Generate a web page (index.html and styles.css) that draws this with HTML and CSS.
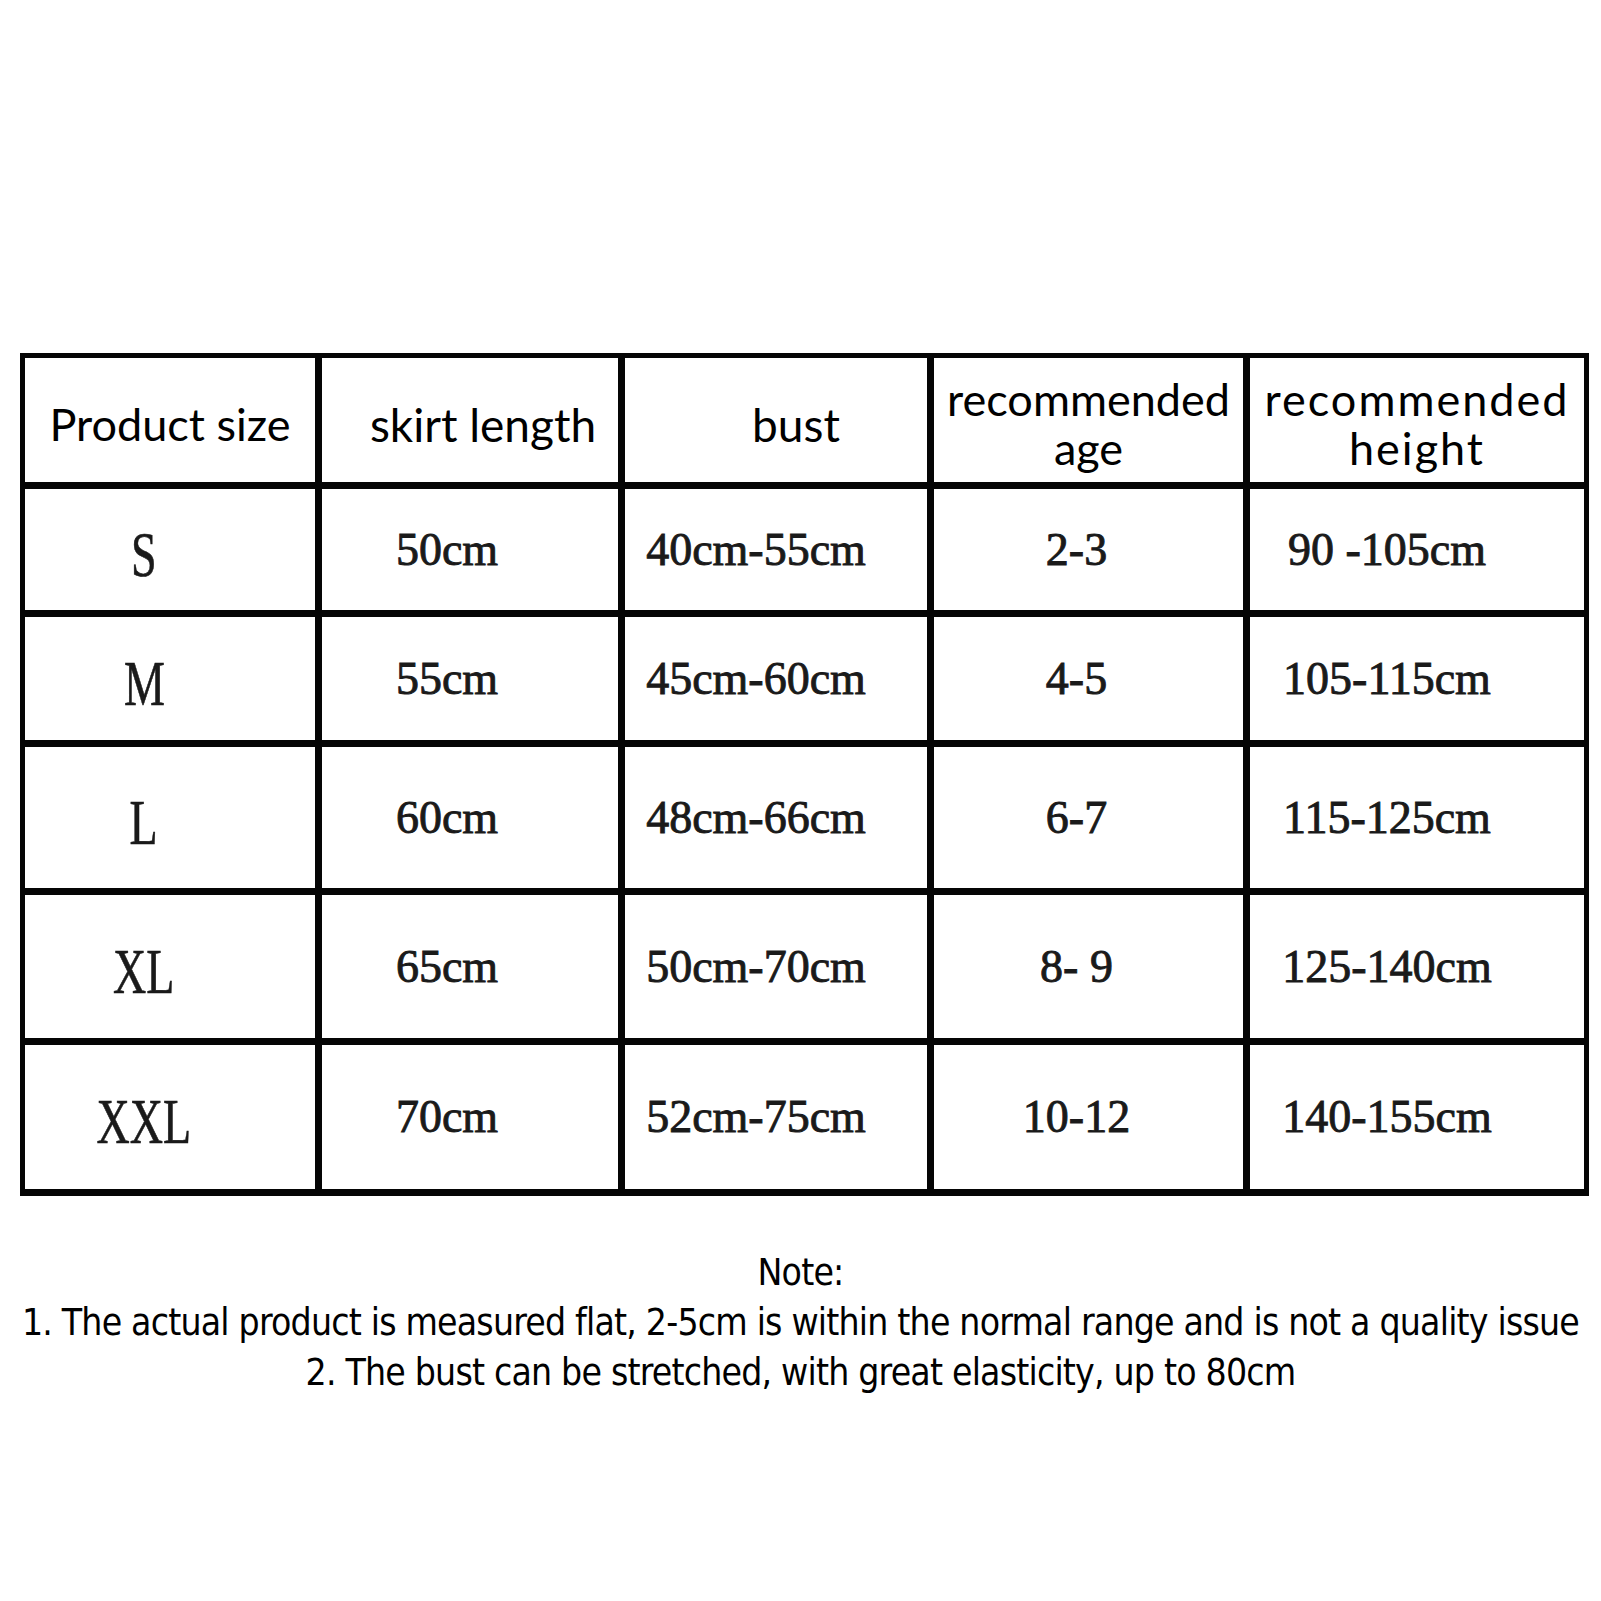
FILE: index.html
```html
<!DOCTYPE html>
<html lang="en">
<head>
<meta charset="utf-8">
<title>Size chart</title>
<link rel="stylesheet" href="styles.css">
</head>
<body>
<main class="page">
  <section class="chart">
    <div class="cell head">Product size</div>
    <div class="cell head h2">skirt length</div>
    <div class="cell head h3">bust</div>
    <div class="cell head h4">recommended<br>age</div>
    <div class="cell head h5">recommended<br>height</div>

    <div class="cell c1"><span class="sz">S</span></div>
    <div class="cell c2">50cm</div>
    <div class="cell c3">40cm-55cm</div>
    <div class="cell c4">2-3</div>
    <div class="cell c5">90 -105cm</div>

    <div class="cell c1"><span class="sz">M</span></div>
    <div class="cell c2">55cm</div>
    <div class="cell c3">45cm-60cm</div>
    <div class="cell c4">4-5</div>
    <div class="cell c5">105-115cm</div>

    <div class="cell c1"><span class="sz">L</span></div>
    <div class="cell c2">60cm</div>
    <div class="cell c3">48cm-66cm</div>
    <div class="cell c4">6-7</div>
    <div class="cell c5">115-125cm</div>

    <div class="cell c1"><span class="sz">XL</span></div>
    <div class="cell c2">65cm</div>
    <div class="cell c3">50cm-70cm</div>
    <div class="cell c4">8-&nbsp;9</div>
    <div class="cell c5">125-140cm</div>

    <div class="cell c1"><span class="sz">XXL</span></div>
    <div class="cell c2">70cm</div>
    <div class="cell c3">52cm-75cm</div>
    <div class="cell c4">10-12</div>
    <div class="cell c5">140-155cm</div>
  </section>

  <section class="note">
    <p>Note:</p>
    <p>1. The actual product is measured flat, 2-5cm is within the normal range and is not a quality issue</p>
    <p>2. The bust can be stretched, with great elasticity, up to 80cm</p>
  </section>
</main>
</body>
</html>
```

FILE: styles.css
```css
html, body {
  margin: 0;
  padding: 0;
  background: #fff;
}

.page {
  width: 1601px;
  min-height: 1601px;
  display: flex;
  flex-direction: column;
}

.chart {
  display: grid;
  grid-template-columns: 290px 296px 302px 309px 334px;
  grid-template-rows: 124px 121px 123px 141px 143px 144px;
  gap: 7px;
  padding: 5px 5px 7px 5px;
  background: #050505;
  width: max-content;
  margin: 353px 0 0 20px;
}

.cell {
  background: #fff;
  display: flex;
  align-items: center;
  justify-content: center;
  text-align: center;
  color: #1a1a1a;
  font-family: "Liberation Serif", "Times New Roman", serif;
  font-weight: normal;
  -webkit-text-stroke: 0.9px #1a1a1a;
  font-size: 46px;
  line-height: 1;
  white-space: nowrap;
  overflow: hidden;
}

.head {
  font-family: Lato, "Open Sans", sans-serif;
  font-weight: normal;
  -webkit-text-stroke: 0;
  font-size: 45px;
  line-height: 49px;
  color: #000;
  padding-top: 8px;
}

.h2 { padding-left: 26px; font-size: 46px; }
.h3 { padding-left: 40px; font-size: 46px; }
.h5 { letter-spacing: 2px; }

.c1 { padding-right: 52px; }
.c2 { padding-right: 46px; }
.c3 { padding-right: 40px; }
.c4 { padding-right: 24px; }
.c5 { padding-right: 60px; }

.sz {
  display: inline-block;
  font-size: 64px;
  transform: scaleX(0.72);
  padding-top: 10px;
  -webkit-text-stroke: 0.6px #1a1a1a;
}

.note {
  margin-top: 52px;
  text-align: center;
  font-family: "DejaVu Sans Condensed", "DejaVu Sans", sans-serif;
  font-stretch: condensed;
  font-size: 37px;
  letter-spacing: -0.8px;
  line-height: 50px;
  color: #000;
}

.note p {
  margin: 0;
  white-space: nowrap;
}
```
